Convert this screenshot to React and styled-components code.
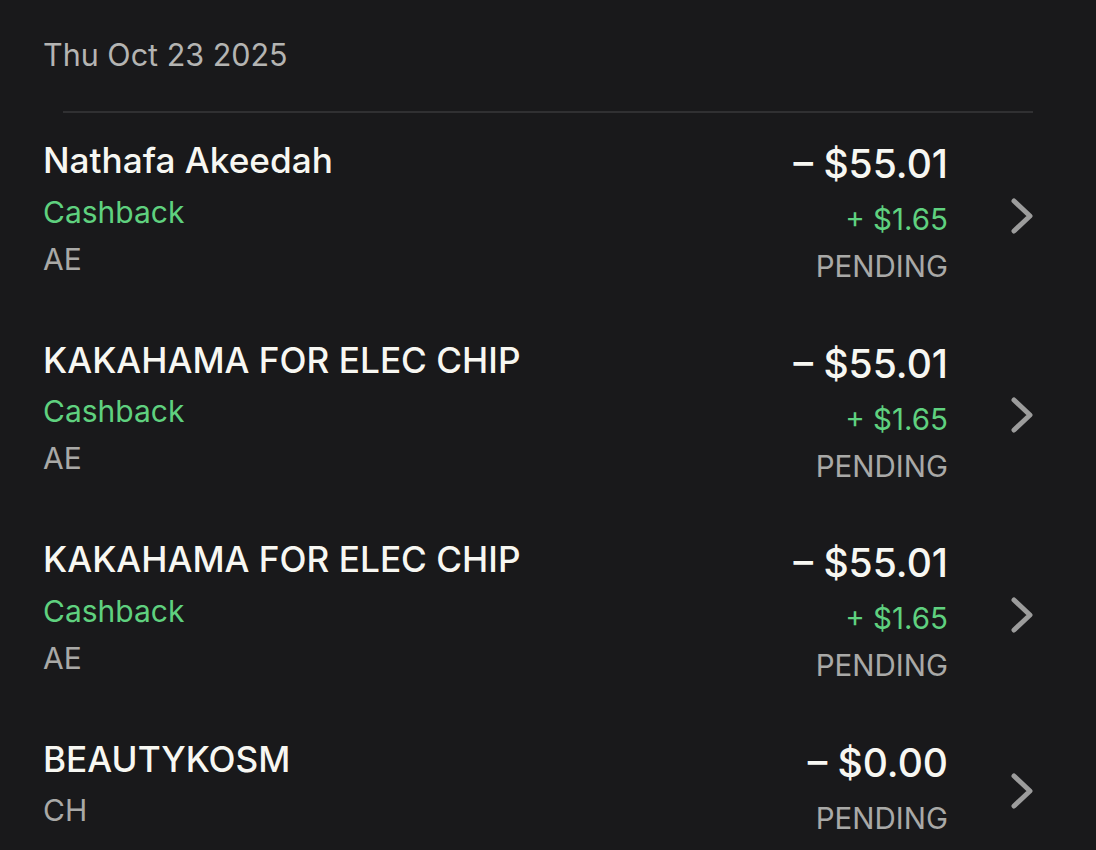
import React from "react";
import styled, { createGlobalStyle } from "styled-components";

const Global = createGlobalStyle`
  html, body { margin: 0; padding: 0; background: #19191b; }
  body { font-family: Inter, "Noto Sans", sans-serif; -webkit-font-smoothing: antialiased; }
`;

const Page = styled.div`
  min-height: 850px;
  background: #19191b;
  padding: 35px 63px 0 43px;
  box-sizing: border-box;
`;

const DateHeader = styled.div`
  font-size: 30.5px;
  line-height: 40px;
  color: #b4b4b2;
  font-weight: 400;
`;

const Divider = styled.div`
  height: 2px;
  background: #303032;
  margin: 36px 0 22px 20px;
`;

const List = styled.div`
  display: flex;
  flex-direction: column;
  gap: 44.6px;
`;

const Row = styled.div`
  display: grid;
  grid-template-columns: 1fr auto 40px;
  column-gap: 45px;
  align-items: start;
`;

const Left = styled.div`
  display: flex;
  flex-direction: column;
  align-items: flex-start;
`;

const Right = styled.div`
  display: flex;
  flex-direction: column;
  align-items: flex-end;
  padding-top: 3px;
`;

const Name = styled.div`
  font-size: 35.2px;
  line-height: 50px;
  color: #f7f7f2;
  font-weight: 500;
`;

const Sub = styled.div`
  font-size: 30px;
  line-height: 47px;
  color: ${(p) => (p.$green ? "#5fd17f" : "#a9a9a7")};
  &:nth-child(2) { margin-top: 3.6px; }
`;

const Amount = styled.div`
  font-size: 39px;
  line-height: 52px;
  color: #f7f7f2;
  font-weight: 500;
`;

const Small = styled.div`
  font-size: 29.5px;
  line-height: 47px;
  color: ${(p) => (p.$green ? "#5fd17f" : "#a9a9a7")};
  &:nth-child(2) { margin-top: 6px; }
`;

const ChevronBox = styled.div`
  align-self: center;
  margin-top: 6px;
  display: flex;
  justify-content: flex-end;
  align-items: center;
`;

const Chevron = () => (
  <ChevronBox>
    <svg width="24" height="40" viewBox="0 0 24 40">
      <polyline
        points="5,5 21,20 5,35"
        fill="none"
        stroke="#9c9c9c"
        strokeWidth="5"
        strokeLinecap="round"
        strokeLinejoin="round"
      />
    </svg>
  </ChevronBox>
);

const items = [
  { name: "Nathafa Akeedah", cashback: true, country: "AE", amount: "– $55.01", back: "+ $1.65" },
  { name: "KAKAHAMA FOR ELEC CHIP", cashback: true, country: "AE", amount: "– $55.01", back: "+ $1.65" },
  { name: "KAKAHAMA FOR ELEC CHIP", cashback: true, country: "AE", amount: "– $55.01", back: "+ $1.65" },
  { name: "BEAUTYKOSM", cashback: false, country: "CH", amount: "– $0.00" },
];

export default function App() {
  return (
    <>
      <Global />
      <Page>
        <DateHeader>Thu Oct 23 2025</DateHeader>
        <Divider />
        <List>
          {items.map((it, i) => (
            <Row key={i}>
              <Left>
                <Name>{it.name}</Name>
                {it.cashback && <Sub $green>Cashback</Sub>}
                <Sub>{it.country}</Sub>
              </Left>
              <Right>
                <Amount>{it.amount}</Amount>
                {it.back && <Small $green>{it.back}</Small>}
                <Small>PENDING</Small>
              </Right>
              <Chevron />
            </Row>
          ))}
        </List>
      </Page>
    </>
  );
}
